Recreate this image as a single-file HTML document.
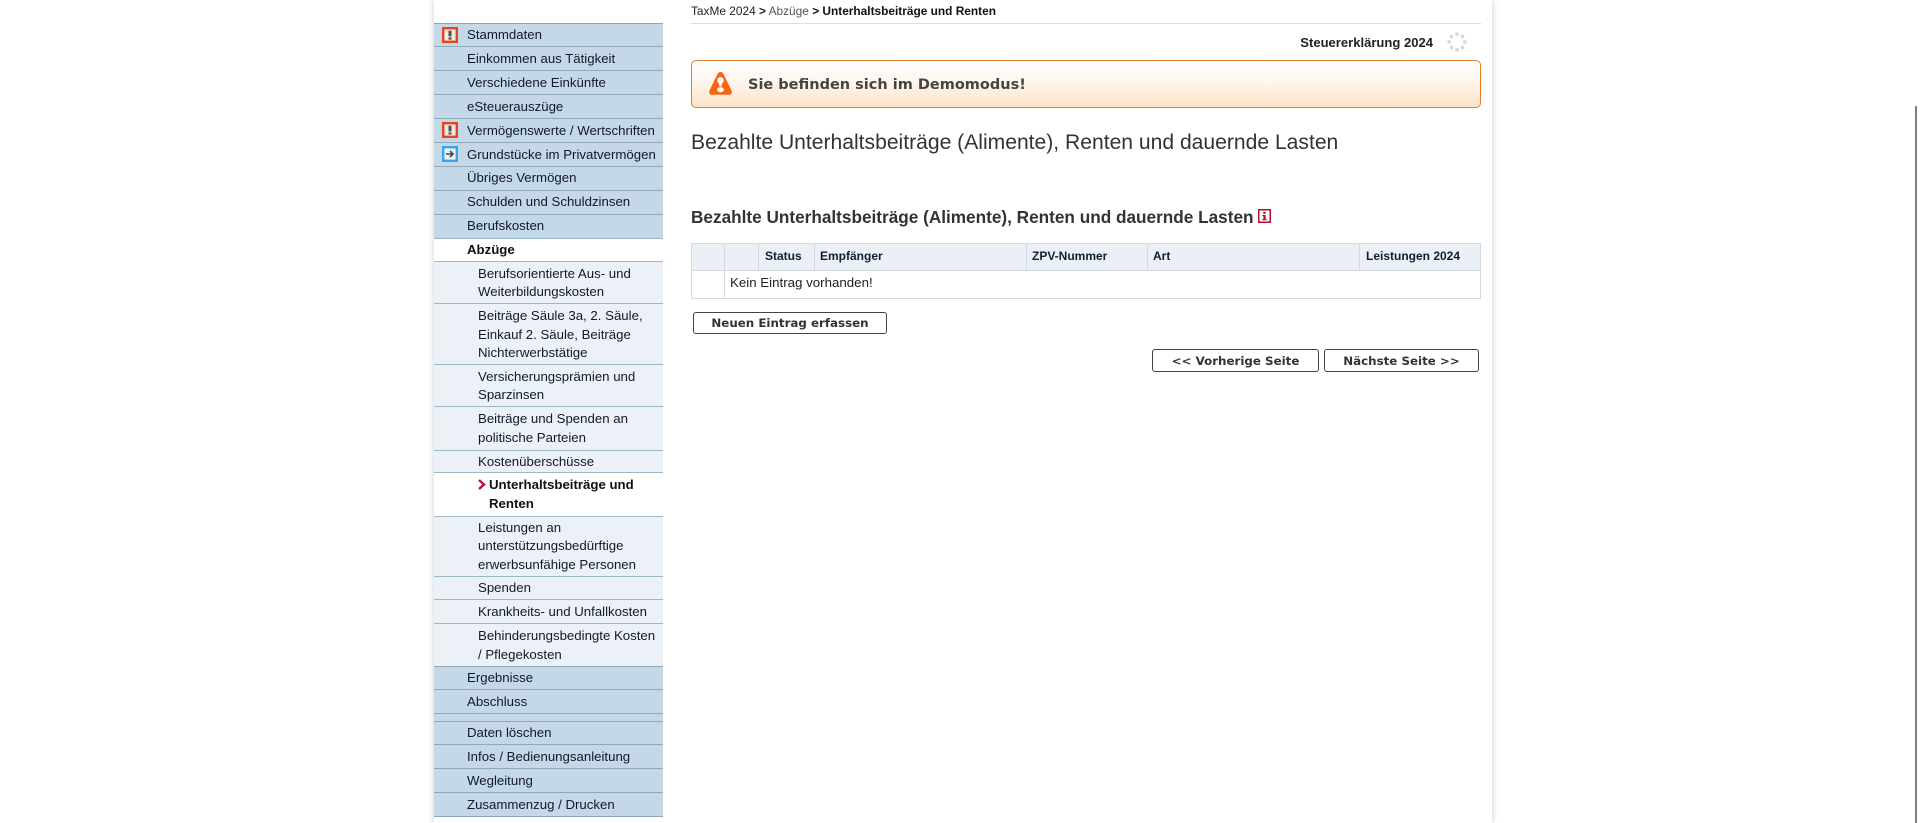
<!DOCTYPE html>
<html lang="de"><head><meta charset="utf-8"><title>TaxMe 2024</title>
<style>
html,body{margin:0;padding:0;width:1920px;height:823px;overflow:hidden;background:#fff}
body{position:relative;font-family:"Liberation Sans",Arial,sans-serif;color:#111}
#col{position:absolute;left:434px;top:0;width:1058px;height:823px;background:#fff;box-shadow:0 0 6px rgba(0,0,0,.22)}
.a{position:absolute;white-space:nowrap}
.bar{position:absolute;left:434px;width:229px}
.m{background:#c5d8e7;border-top:1px solid #8fa9b8;box-sizing:border-box}
.s{background:#ecf1f7;border-top:1px solid #9db7c4;box-sizing:border-box}
.w{background:#fff;border-top:1px solid #9db7c4;box-sizing:border-box}
.t{position:absolute;white-space:nowrap;font-size:13.23px;line-height:19px;color:#101a2a;height:19px}
.b{font-weight:bold;color:#111}
.th{position:absolute;top:244px;height:26px;background:#eaf0f6}
.v{position:absolute;width:1px;background:#d3dbe2}
.btn{position:absolute;box-sizing:border-box;border:1px solid #444;border-radius:3px;background:#fff;font-family:"DejaVu Sans",sans-serif;font-weight:bold;font-size:11.85px;color:#333;text-align:center;white-space:nowrap}
</style></head><body>
<div id="col"></div>

<div class="bar m" style="top:23px;height:24px"></div>
<div class="bar m" style="top:46px;height:24px"></div>
<div class="bar m" style="top:70px;height:24px"></div>
<div class="bar m" style="top:94px;height:24px"></div>
<div class="bar m" style="top:118px;height:24px"></div>
<div class="bar m" style="top:142px;height:24px"></div>
<div class="bar m" style="top:166px;height:24px"></div>
<div class="bar m" style="top:190px;height:24px"></div>
<div class="bar m" style="top:214px;height:24px"></div>
<div class="bar w" style="top:238px;height:24px"></div>
<div class="bar s" style="top:261px;height:42px"></div>
<div class="bar s" style="top:303px;height:61px"></div>
<div class="bar s" style="top:364px;height:42px"></div>
<div class="bar s" style="top:406px;height:44px"></div>
<div class="bar s" style="top:450px;height:22px"></div>
<div class="bar w" style="top:472px;height:44px"></div>
<div class="bar s" style="top:516px;height:60px"></div>
<div class="bar s" style="top:576px;height:23px"></div>
<div class="bar s" style="top:599px;height:24px"></div>
<div class="bar s" style="top:623px;height:43px"></div>
<div class="bar m" style="top:666px;height:23px"></div>
<div class="bar m" style="top:689px;height:24px"></div>
<div class="bar m" style="top:713px;height:8px"></div>
<div class="bar m" style="top:721px;height:23px"></div>
<div class="bar m" style="top:744px;height:24px"></div>
<div class="bar m" style="top:768px;height:24px"></div>
<div class="bar m" style="top:792px;height:25px;border-bottom:1px solid #8fa9b8"></div>

<div class="t" style="left:467px;top:25px">Stammdaten</div>
<div class="t" style="left:467px;top:49px">Einkommen aus Tätigkeit</div>
<div class="t" style="left:467px;top:73px">Verschiedene Einkünfte</div>
<div class="t" style="left:467px;top:97px">eSteuerauszüge</div>
<div class="t" style="left:467px;top:121px">Vermögenswerte / Wertschriften</div>
<div class="t" style="left:467px;top:145px">Grundstücke im Privatvermögen</div>
<div class="t" style="left:467px;top:168px">Übriges Vermögen</div>
<div class="t" style="left:467px;top:192px">Schulden und Schuldzinsen</div>
<div class="t" style="left:467px;top:216px">Berufskosten</div>
<div class="t b" style="left:467px;top:240px">Abzüge</div>
<div class="t" style="left:478px;top:264px">Berufsorientierte Aus- und</div>
<div class="t" style="left:478px;top:282px">Weiterbildungskosten</div>
<div class="t" style="left:478px;top:306px">Beiträge Säule 3a, 2. Säule,</div>
<div class="t" style="left:478px;top:325px">Einkauf 2. Säule, Beiträge</div>
<div class="t" style="left:478px;top:343px">Nichterwerbstätige</div>
<div class="t" style="left:478px;top:367px">Versicherungsprämien und</div>
<div class="t" style="left:478px;top:385px">Sparzinsen</div>
<div class="t" style="left:478px;top:409px">Beiträge und Spenden an</div>
<div class="t" style="left:478px;top:428px">politische Parteien</div>
<div class="t" style="left:478px;top:452px">Kostenüberschüsse</div>
<svg class="a" style="left:477px;top:479px" width="10" height="11" viewBox="0 0 10 11"><path d="M2 1 L7 5.5 L2 10" fill="none" stroke="#b5123a" stroke-width="2.4"/></svg>
<div class="t b" style="left:489px;top:475px">Unterhaltsbeiträge und</div>
<div class="t b" style="left:489px;top:494px">Renten</div>
<div class="t" style="left:478px;top:518px">Leistungen an</div>
<div class="t" style="left:478px;top:536px">unterstützungsbedürftige</div>
<div class="t" style="left:478px;top:555px">erwerbsunfähige Personen</div>
<div class="t" style="left:478px;top:578px">Spenden</div>
<div class="t" style="left:478px;top:602px">Krankheits- und Unfallkosten</div>
<div class="t" style="left:478px;top:626px">Behinderungsbedingte Kosten</div>
<div class="t" style="left:478px;top:645px">/ Pflegekosten</div>
<div class="t" style="left:467px;top:668px">Ergebnisse</div>
<div class="t" style="left:467px;top:692px">Abschluss</div>
<div class="t" style="left:467px;top:723px">Daten löschen</div>
<div class="t" style="left:467px;top:747px">Infos / Bedienungsanleitung</div>
<div class="t" style="left:467px;top:771px">Wegleitung</div>
<div class="t" style="left:467px;top:795px">Zusammenzug / Drucken</div>

<svg class="a" style="left:442px;top:27px" width="16" height="16" viewBox="0 0 16 16"><rect x="1.200" y="1.200" width="13.600" height="13.600" fill="#eeebe6" stroke="#e8431a" stroke-width="2.400"/><rect x="6.500" y="3.600" width="3" height="5.800" fill="#5a4a45"/><rect x="6.500" y="10.400" width="3" height="2.200" fill="#5a4a45"/></svg>
<svg class="a" style="left:442px;top:122px" width="16" height="16" viewBox="0 0 16 16"><rect x="1.200" y="1.200" width="13.600" height="13.600" fill="#eeebe6" stroke="#e8431a" stroke-width="2.400"/><rect x="6.500" y="3.600" width="3" height="5.800" fill="#5a4a45"/><rect x="6.500" y="10.400" width="3" height="2.200" fill="#5a4a45"/></svg>
<svg class="a" style="left:442px;top:146px" width="16" height="16" viewBox="0 0 16 16"><rect x="1.200" y="1.200" width="13.600" height="13.600" fill="#eef3f7" stroke="#35a5f2" stroke-width="2.400"/><path d="M4 8 H11 M8 5 L11 8 L8 11" fill="none" stroke="#444" stroke-width="1.600"/></svg>

<div class="a" style="left:691px;top:4px;font-size:11.880px;line-height:15px;color:#222">TaxMe 2024 <b>&gt;</b> <span style="color:#555">Abzüge</span> <b style="color:#111">&gt; Unterhaltsbeiträge und Renten</b></div>
<div class="a" style="left:691px;top:23px;width:790px;height:1px;background:#ddd"></div>
<div class="a" style="right:487px;top:34px;font-size:13.060px;line-height:17px;font-weight:bold;color:#222">Steuererklärung 2024</div>
<svg class="a" style="left:1447px;top:32px" width="20" height="20" viewBox="0 0 20 20"><g fill="#d8d8d8"><circle cx="10" cy="2.200" r="1.900"/><circle cx="15.500" cy="4.500" r="1.900"/><circle cx="17.800" cy="10" r="1.900"/><circle cx="15.500" cy="15.500" r="1.900"/><circle cx="10" cy="17.800" r="1.900"/><circle cx="4.500" cy="15.500" r="1.900"/><circle cx="2.200" cy="10" r="1.900"/><circle cx="4.500" cy="4.500" r="1.900"/></g></svg>

<div class="a" style="left:691px;top:60px;width:790px;height:48px;box-sizing:border-box;border:1px solid #e07f2b;border-radius:5px;background:linear-gradient(#fff 0%,#fff4ea 50%,#fde2c9 100%)"></div>
<svg class="a" style="left:708px;top:70px" width="25" height="26" viewBox="0 0 25 26"><path d="M12.500 2 C14 2 15 3 15.600 4.200 L23.500 20.500 C24.500 22.800 23.500 24.800 21 24.800 L4 24.800 C1.500 24.800 .5 22.800 1.500 20.500 L9.400 4.200 C10 3 11 2 12.500 2 Z" fill="#fb6410"/><ellipse cx="12.500" cy="10.500" rx="3.200" ry="3.500" fill="#fff"/><path d="M10.800 13 h3.400 l-.7 3.500 h-2Z" fill="#fff"/><ellipse cx="12.500" cy="19.700" rx="3.400" ry="2.600" fill="#fff"/></svg>
<div class="a" style="left:748px;top:75px;font-family:'DejaVu Sans',sans-serif;font-weight:bold;font-size:14.500px;line-height:20px;color:#444">Sie befinden sich im Demomodus!</div>

<div class="a" style="left:691px;top:129px;font-size:21.100px;line-height:28px;color:#333">Bezahlte Unterhaltsbeiträge (Alimente), Renten und dauernde Lasten</div>
<div class="a" style="left:691px;top:207px;font-size:17.190px;line-height:20px;font-weight:bold;color:#333">Bezahlte Unterhaltsbeiträge (Alimente), Renten und dauernde Lasten</div>
<svg class="a" style="left:1258px;top:209px" width="13" height="14" viewBox="0 0 13 14"><rect x=".75" y=".75" width="11.500" height="12.500" fill="#fff" stroke="#b5122d" stroke-width="1.500"/><rect x="5.300" y="2.800" width="2.400" height="2" fill="#b5122d"/><path d="M4.300 6 H7.700 V10.200 H8.800 V11.300 H4.300 V10.200 H5.400 V7.100 H4.300Z" fill="#b5122d"/></svg>

<div class="th" style="left:692px;width:788px"></div>
<div class="a" style="left:691px;top:243px;width:790px;height:1px;background:#d3dbe2"></div>
<div class="a" style="left:691px;top:270px;width:790px;height:1px;background:#d3dbe2"></div>
<div class="a" style="left:691px;top:298px;width:790px;height:1px;background:#d3dbe2"></div>
<div class="v" style="left:691px;top:243px;height:56px"></div>
<div class="v" style="left:1480px;top:243px;height:56px"></div>
<div class="v" style="left:724px;top:243px;height:56px"></div>
<div class="v" style="left:758px;top:243px;height:27px"></div>
<div class="v" style="left:814px;top:243px;height:27px"></div>
<div class="v" style="left:1026px;top:243px;height:27px"></div>
<div class="v" style="left:1147px;top:243px;height:27px"></div>
<div class="v" style="left:1359px;top:243px;height:27px"></div>
<div class="a" style="left:765px;top:249px;font-size:12px;line-height:15px;font-weight:bold;color:#151d33">Status</div>
<div class="a" style="left:820px;top:249px;font-size:12px;line-height:15px;font-weight:bold;color:#151d33">Empfänger</div>
<div class="a" style="left:1032px;top:249px;font-size:12px;line-height:15px;font-weight:bold;color:#151d33">ZPV-Nummer</div>
<div class="a" style="left:1153px;top:249px;font-size:12px;line-height:15px;font-weight:bold;color:#151d33">Art</div>
<div class="a" style="left:1366px;top:249px;font-size:12px;line-height:15px;font-weight:bold;color:#151d33">Leistungen 2024</div>
<div class="a" style="left:730px;top:275px;font-size:13.300px;line-height:16px;color:#222">Kein Eintrag vorhanden!</div>

<div class="btn" style="left:693px;top:312px;width:194px;height:22px;line-height:20px">Neuen Eintrag erfassen</div>
<div class="btn" style="left:1152px;top:349px;width:167px;height:23px;line-height:23px">&lt;&lt; Vorherige Seite</div>
<div class="btn" style="left:1324px;top:349px;width:155px;height:23px;line-height:23px">Nächste Seite &gt;&gt;</div>

<div class="a" style="left:1915px;top:106px;width:2px;height:717px;background:#808080"></div>
</body></html>
